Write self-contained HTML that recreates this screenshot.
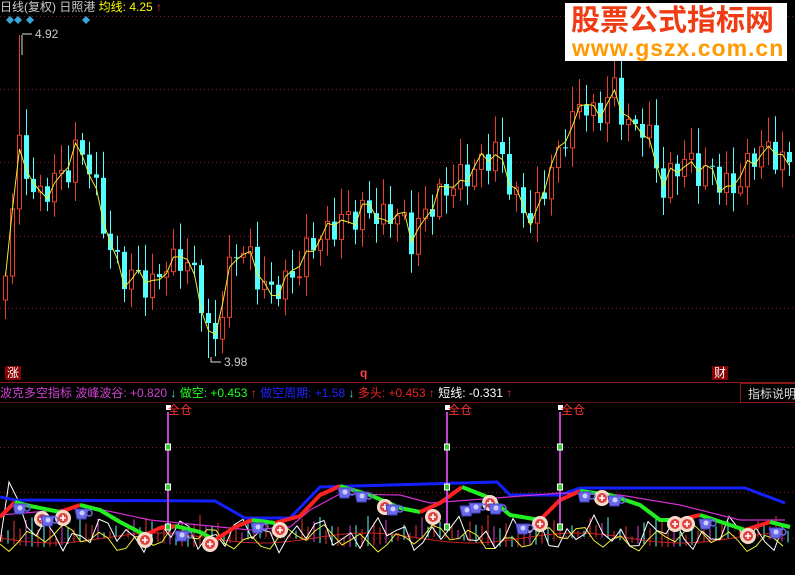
<!DOCTYPE html>
<html><head><meta charset="utf-8">
<style>
body{margin:0;background:#000;width:795px;height:575px;overflow:hidden;position:relative;font-family:"Liberation Sans","Noto Sans CJK SC",sans-serif}
.t{position:absolute;font-size:12px;white-space:nowrap;line-height:14px}
svg{position:absolute;left:0;top:0}
</style></head><body>
<svg id="s" width="795" height="575" viewBox="0 0 795 575">
<g stroke="#7a1a1a" stroke-dasharray="1 3" stroke-width="1">
<line x1="0" y1="16.5" x2="795" y2="16.5"/><line x1="0" y1="89.5" x2="795" y2="89.5"/><line x1="0" y1="162.5" x2="795" y2="162.5"/><line x1="0" y1="236.5" x2="795" y2="236.5"/><line x1="0" y1="308.5" x2="795" y2="308.5"/>
<line x1="0" y1="447.5" x2="795" y2="447.5"/><line x1="0" y1="492.5" x2="795" y2="492.5"/><line x1="0" y1="538.5" x2="795" y2="538.5"/>
</g>
<line x1="0" y1="382.5" x2="795" y2="382.5" stroke="#8a1a1a"/>
<line x1="0" y1="402.5" x2="795" y2="402.5" stroke="#5a1010"/>
<rect x="740.5" y="383.5" width="60" height="19" fill="#000" stroke="#8a1a1a"/>
<g id="c"></g><g id="l"></g>
<g fill="#3aa6d8"><path d="M6 20l4-4 4 4-4 4z"/><path d="M14 20l4-4 4 4-4 4z"/><path d="M26 20l4-4 4 4-4 4z"/><path d="M82 20l4-4 4 4-4 4z"/></g>
<path d="M22 35v20M22 34h10" stroke="#ddd" fill="none"/>
<path d="M211 357v5h10" stroke="#ddd" fill="none"/>
</svg>
<div class="t" style="left:0;top:0;color:#ccc">日线(复权) 日照港 <span style="color:#ff0">均线: 4.25</span> <span style="color:#f33">↑</span></div>
<div class="t" style="left:35px;top:27px;color:#ccc">4.92</div>
<div class="t" style="left:224px;top:355px;color:#ccc">3.98</div>
<div class="t" style="left:5px;top:366px;color:#fff;background:#800;padding:0 2px">涨</div>
<div class="t" style="left:360px;top:366px;color:#f44;font-weight:bold">q</div>
<div class="t" style="left:712px;top:366px;color:#fff;background:#800;padding:0 2px">财</div>
<div class="t" style="left:0;top:386px;color:#d040d0">波克多空指标 波峰波谷: +0.820 <span style="color:#4dd">↓</span> <span style="color:#2f2">做空: +0.453 </span><span style="color:#f33">↑</span> <span style="color:#22f">做空周期: +1.58 </span><span style="color:#4dd">↓</span> <span style="color:#e22">多头: +0.453 ↑</span> <span style="color:#fff">短线: -0.331 </span><span style="color:#f33">↑</span></div>
<div class="t" style="left:748px;top:387px;color:#ddd">指标说明</div>
<div class="t" style="left:168px;top:403px;color:#f33">全仓</div>
<div class="t" style="left:448px;top:403px;color:#f33">全仓</div>
<div class="t" style="left:561px;top:403px;color:#f33">全仓</div>
<div style="position:absolute;left:565px;top:3px;width:222px;height:58px;background:#fff"></div>
<div class="t" style="left:571px;top:4px;font-size:29px;line-height:34px;color:#f03c14;font-weight:bold">股票公式指标网</div>
<div class="t" style="left:572px;top:35px;font-size:23px;line-height:26px;color:#ff9a00;font-weight:bold;letter-spacing:1px">www.gszx.com.cn</div>
<script>
(function(){
var NS="http://www.w3.org/2000/svg";
function el(p,t,a){var e=document.createElementNS(NS,t);for(var k in a)e.setAttribute(k,a[k]);p.appendChild(e);return e;}
function interp(K,x){for(var i=0;i<K.length-1;i++){if(x<=K[i+1][0]){var a=K[i],b=K[i+1];return a[1]+(b[1]-a[1])*(x-a[0])/(b[0]-a[0]);}}return K[K.length-1][1];}
var K=[[0,300],[5,260],[15,150],[25,170],[40,200],[60,175],[75,143],[90,180],[100,215],[110,250],[125,290],[135,270],[150,285],[165,270],[180,250],[190,270],[200,310],[210,350],[220,300],[230,260],[245,250],[260,280],[270,300],[290,270],[310,250],[330,220],[350,225],[365,200],[380,225],[400,210],[410,240],[420,225],[440,185],[460,185],[480,155],[500,160],[510,190],[520,200],[530,230],[545,175],[560,140],[570,130],[580,95],[590,110],[600,115],[610,90],[620,110],[630,125],[640,130],[650,150],[660,185],[670,170],[690,165],[710,170],[720,195],[730,185],[745,165],[760,155],[770,145],[785,165],[795,170]];
var c=document.getElementById('c'),l=document.getElementById('l');
var prev=interp(K,0),ma=[];
for(var i=0;i<113;i++){var x=3+i*7;var cl=interp(K,x)+Math.sin(i*2.3)*14+Math.sin(i*5.1)*7;var op=prev;var tp=Math.min(op,cl),bt=Math.max(op,cl);
var hi=tp-(4+Math.abs(Math.sin(i*3.7))*22),lo=bt+(3+Math.abs(Math.cos(i*1.9))*16);
if(i==2)hi=35;if(i==29)lo=358;
var up=cl<op;var col=up?'#e8402c':'#5ff';
el(c,'line',{x1:x+2.5,y1:hi,x2:x+2.5,y2:lo,stroke:col});
if(up)el(c,'rect',{x:x+0.5,y:tp,width:4,height:Math.max(bt-tp,1),fill:'#000',stroke:col});
else el(c,'rect',{x:x,y:tp,width:5,height:Math.max(bt-tp,1),fill:col});
ma.push((x+2.5)+','+(interp(K,x)+Math.sin(i*2.3)*5).toFixed(1));prev=cl;}
el(c,'polyline',{points:ma.join(' '),fill:'none',stroke:'#ee3',"stroke-width":1});
function pl(pts,col,w){el(l,'polyline',{points:pts.map(function(p){return p.join(',')}).join(' '),fill:'none',stroke:col,"stroke-width":w});}
for(var x=2;x<790;x+=6){var b=542+Math.sin(x*0.04)*5;var t=526+Math.sin(x*0.37)*6+Math.cos(x*0.11)*5;var cc=['#e33','#5ff','#e33','#e33','#d4d','#5ff'][(x/6|0)%6];el(l,'line',{x1:x,y1:t,x2:x,y2:b,stroke:cc});}
var yel=[],wh=[],rd=[];for(var x=0;x<=790;x+=9){yel.push([x,538+Math.sin(x*0.17)*8+Math.cos(x*0.05)*6]);wh.push([x,534+Math.sin(x*0.23)*11+Math.cos(x*0.09)*8]);rd.push([x,538+Math.sin(x*0.03)*5]);}
wh[1][1]=482;wh[2][1]=500;
pl(rd,'#c22',1);pl(yel,'#ee3',1);pl(wh,'#fff',1);
pl([[0,497],[15,500],[215,501],[245,518],[290,518],[320,487],[497,482],[510,495],[560,495],[580,488],[745,488],[785,503]],'#1520ff',3);
pl([[0,515],[60,510],[80,505],[150,520],[200,525],[250,530],[290,527],[310,510],[340,494],[400,495],[430,503],[470,500],[560,493],[620,495],[680,505],[740,520],[785,520]],'#d030d0',1.2);
var seg=[[[0,517],[15,502]],'r',[[15,502],[30,506],[60,512]],'g',[[60,512],[80,505]],'r',[[80,505],[100,510],[120,522],[145,535]],'g',[[145,535],[160,528],[175,526]],'r',[[175,526],[200,532],[215,540]],'g',[[215,540],[235,527],[252,520]],'r',[[252,520],[275,523]],'g',[[275,523],[300,516],[320,495],[340,486]],'r',[[340,486],[370,495],[400,508],[420,512]],'g',[[420,512],[440,503],[462,487]],'r',[[462,487],[490,498],[510,515],[540,520]],'g',[[540,520],[560,500],[580,491]],'r',[[580,491],[610,495],[640,505],[660,520],[680,520]],'g',[[680,520],[700,515]],'r',[[700,515],[730,525],[745,530]],'g',[[745,530],[770,522]],'r',[[770,522],[790,527]],'g'];
for(var i=0;i<seg.length;i+=2)pl(seg[i],seg[i+1]=='r'?'#f22':'#2e2',4);
[168,447,560].forEach(function(x){el(l,'line',{x1:x,y1:412,x2:x,y2:530,stroke:'#c040d0',"stroke-width":2});[447,487,527].forEach(function(y){el(l,'rect',{x:x-2.5,y:y-3,width:5,height:6,fill:'#3c3',stroke:'#fff'});});el(l,'rect',{x:x-2,y:405,width:5,height:5,fill:'#fff'});});
function cross(x,y){el(l,'circle',{cx:x,cy:y,r:7.5,fill:'#f4d8c8',stroke:'#f9e0d0'});el(l,'circle',{cx:x,cy:y,r:5,fill:'#e04040'});el(l,'path',{d:'M'+(x-3)+' '+y+'h6M'+x+' '+(y-3)+'v6',stroke:'#fff',"stroke-width":1.6});}
function cup(x,y){el(l,'path',{d:'M'+(x-7)+' '+(y-5)+'h13l-2 10h-9z',fill:'#6a6ae8',stroke:'#4040c0'});el(l,'circle',{cx:x+7,cy:y-1,r:3,fill:'none',stroke:'#6a6ae8',"stroke-width":1.5});el(l,'circle',{cx:x,cy:y-1,r:2.5,fill:'#ccf'});}
[[42,519],[63,518],[145,540],[210,544],[280,530],[433,517],[385,507],[490,503],[540,524],[602,498],[675,524],[687,524],[748,536]].forEach(function(p){cross(p[0],p[1]);});
[[20,509],[48,521],[82,514],[182,536],[258,528],[345,493],[362,497],[393,510],[467,511],[476,508],[496,509],[523,529],[585,497],[615,501],[706,524],[776,533]].forEach(function(p){cup(p[0],p[1]);});
})();
</script>
</body></html>
